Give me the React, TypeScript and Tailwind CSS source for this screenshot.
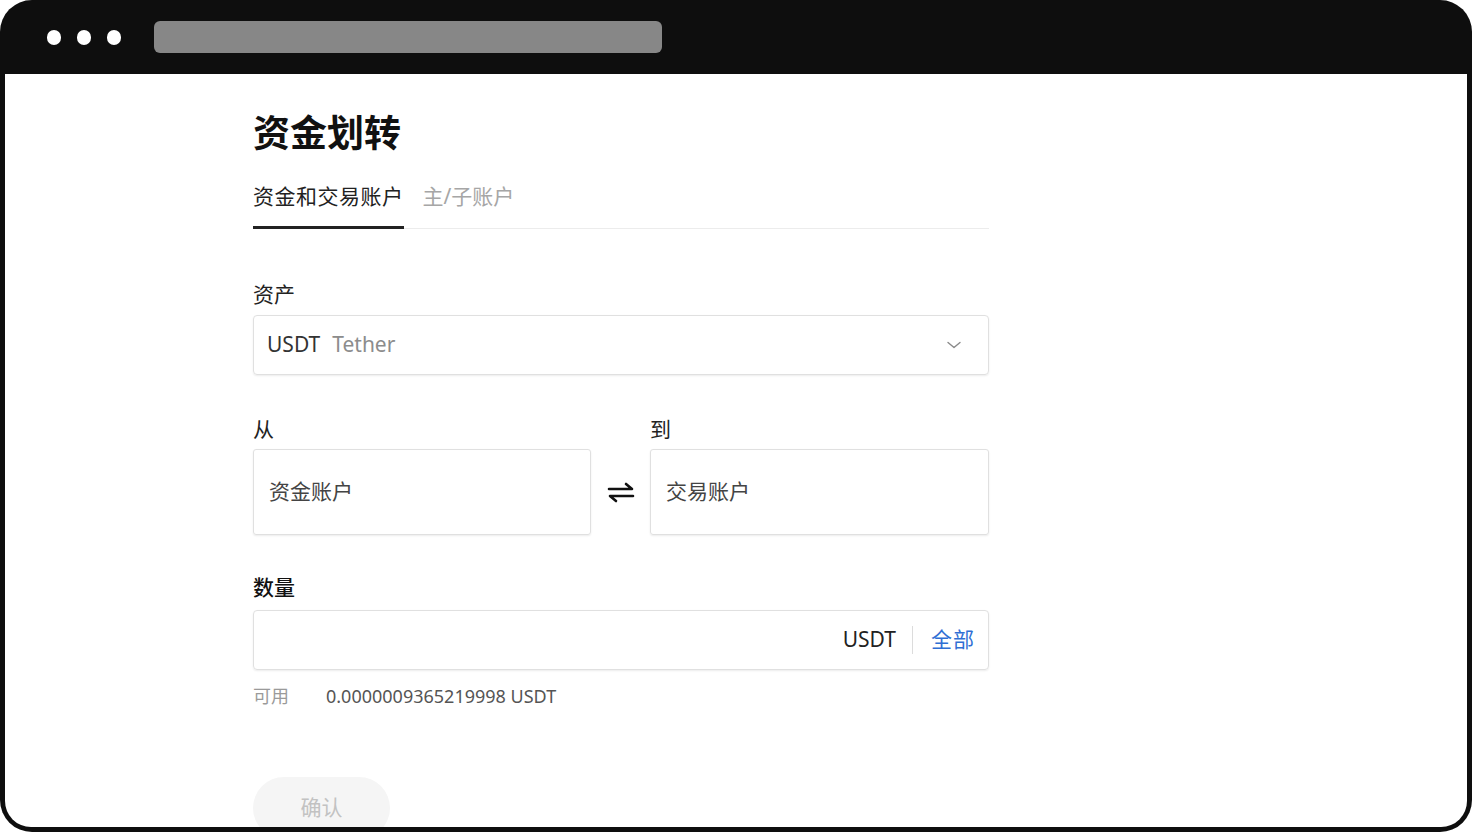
import React from 'react';

const font = { fontFamily: '"Noto Sans", "Noto Sans CJK SC", sans-serif' };

const Field = ({ label, children }: { label: string; children: React.ReactNode }) => (
  <div className="flex flex-col">
    <span className="text-[21px] leading-[28px] text-[#222]">{label}</span>
    {children}
  </div>
);

const App = () => {
  return (
    <div className="w-[1472px] h-[832px] bg-white" style={font}>
      <div className="h-full flex flex-col bg-[#0e0e0e] rounded-[32px] px-[5px] pb-[5px] overflow-hidden">
        {/* window chrome */}
        <div className="h-[74px] shrink-0 flex items-start pt-[21px] pl-[42px]">
          <div className="flex items-center gap-[16px] h-[32px]">
            <span className="w-[14px] h-[15px] rounded-full bg-white" />
            <span className="w-[14px] h-[15px] rounded-full bg-white" />
            <span className="w-[14px] h-[15px] rounded-full bg-white" />
          </div>
          <div className="ml-[33px] w-[508px] h-[32px] rounded-[6px] bg-[#878787]" />
        </div>

        {/* page */}
        <div className="flex-1 bg-white rounded-b-[26px] overflow-hidden pl-[248px] pt-[37px]">
          <div className="w-[736px] flex flex-col">
            <h1 className="text-[37px] leading-[44px] font-bold text-[#111]">资金划转</h1>

            <div className="mt-[27px] flex gap-[19px] border-b border-[#ececec]">
              <span className="text-[21px] leading-[28px] tracking-[0.5px] text-[#222] pb-[16px] border-b-[3px] border-[#222] -mb-px">
                资金和交易账户
              </span>
              <span className="text-[21px] leading-[28px] text-[#a6a6a6]">主/子账户</span>
            </div>

            <div className="mt-[51px]">
              <Field label="资产">
                <div className="mt-[7px] h-[60px] flex items-center justify-between px-[13px] border border-[#e0e0e0] rounded-[4px] shadow-[0_1px_2px_rgba(0,0,0,0.08)]">
                  <div className="flex items-center gap-[12px] text-[21px]">
                    <span className="text-[#333]">USDT</span>
                    <span className="text-[#8c8c8c]">Tether</span>
                  </div>
                  <svg width="18" height="18" viewBox="0 0 18 18" className="mr-[12px]">
                    <path d="M3 6.5l6 5 6-5" fill="none" stroke="#8a8a8a" strokeWidth="1.4" strokeLinecap="round" strokeLinejoin="round" />
                  </svg>
                </div>
              </Field>
            </div>

            <div className="mt-[40px] flex items-end">
              <div className="w-[338px]">
                <Field label="从">
                  <div className="mt-[6px] h-[86px] flex items-center px-[15px] border border-[#e0e0e0] rounded-[3px] shadow-[0_1px_2px_rgba(0,0,0,0.08)] text-[21px] text-[#444]">
                    资金账户
                  </div>
                </Field>
              </div>
              <div className="w-[59px] h-[86px] flex items-center justify-center">
                <svg width="28" height="24" viewBox="0 0 28 24">
                  <path d="M2 9h23l-6-5M26 16H3l6 5" fill="none" stroke="#111" strokeWidth="2.6" strokeLinecap="round" strokeLinejoin="round" />
                </svg>
              </div>
              <div className="w-[339px]">
                <Field label="到">
                  <div className="mt-[6px] h-[86px] flex items-center px-[15px] border border-[#e0e0e0] rounded-[3px] shadow-[0_1px_2px_rgba(0,0,0,0.08)] text-[21px] text-[#444]">
                    交易账户
                  </div>
                </Field>
              </div>
            </div>

            <div className="mt-[38px]">
              <div className="flex flex-col">
                <span className="text-[21px] leading-[28px] text-[#111] font-medium">数量</span>
                <div className="mt-[9px] h-[60px] flex items-center justify-end pr-[13px] border border-[#e0e0e0] rounded-[4px] shadow-[0_1px_2px_rgba(0,0,0,0.08)]">
                  <span className="text-[21px] text-[#222]">USDT</span>
                  <span className="ml-[16px] mr-[18px] w-px h-[28px] bg-[#dcdcdc]" />
                  <span className="text-[21px] tracking-[1px] text-[#2f6fd4]">全部</span>
                </div>
              </div>
            </div>

            <div className="mt-[14px] flex items-center text-[18px] leading-[24px]">
              <span className="w-[73px] text-[#9a9a9a]">可用</span>
              <span className="text-[#555]">0.0000009365219998 USDT</span>
            </div>

            <button className="mt-[69px] w-[137px] h-[62px] rounded-full bg-[#f5f5f5] text-[21px] text-[#c2c2c2]">
              确认
            </button>
          </div>
        </div>
      </div>
    </div>
  );
};

export default App;
